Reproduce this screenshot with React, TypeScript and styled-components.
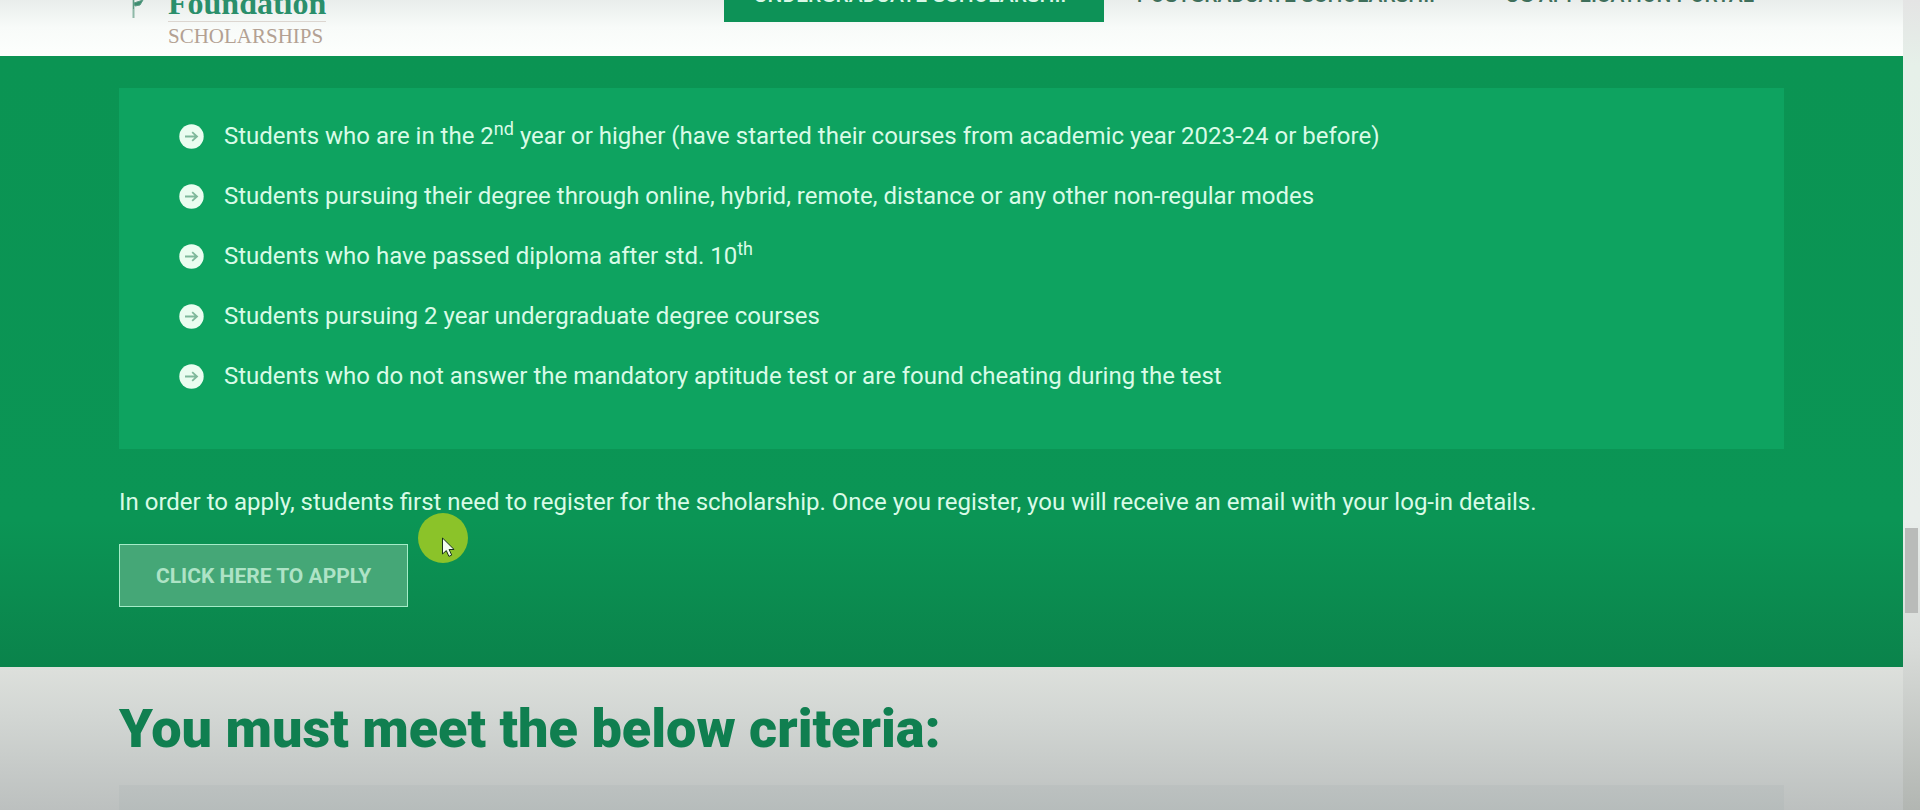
import React from "react";
import styled, { createGlobalStyle } from "styled-components";

const GlobalStyle = createGlobalStyle`
  * { box-sizing: border-box; }
  body {
    margin: 0;
    font-family: Roboto, "Liberation Sans", sans-serif;
    font-size: 24px;
    line-height: 36px;
  }
`;

const Page = styled.div`
  display: grid;
  grid-template-columns: minmax(0, 1fr) 17px;
  height: 100vh;
  overflow: hidden;
`;

const Content = styled.div`
  display: flex;
  flex-direction: column;
  min-width: 0;
  overflow: hidden;
`;

const Header = styled.header`
  display: flex;
  flex: none;
  justify-content: space-between;
  align-items: flex-end;
  height: 56px;
  padding: 0 119px;
  background: linear-gradient(#e9edeb, #f8fbf9 50%, #fdfffd);
`;

const Logo = styled.a`
  display: flex;
  align-items: flex-end;
  gap: 24px;
  padding: 0 0 10px 12px;
  text-decoration: none;
`;

const LogoMark = styled.svg`
  width: 13px;
  height: 40px;
  margin-bottom: 26px;
`;

const LogoText = styled.span`
  display: flex;
  flex-direction: column;
  font-family: "Liberation Serif", serif;
`;

const LogoName = styled.span`
  border-bottom: 1px solid #dcd6d0;
  color: #2a8f6b;
  font-size: 32px;
  font-weight: 700;
  line-height: 36px;
`;

const LogoSub = styled.span`
  padding-top: 4px;
  color: #b3a193;
  font-size: 21px;
  line-height: 20px;
`;

const Nav = styled.nav`
  display: flex;
  gap: 3px;
  padding-bottom: 34px;
`;

const NavLink = styled.a<{ $active?: boolean }>`
  padding: 14px 30px;
  background: ${(p) => (p.$active ? "#0d9257" : "transparent")};
  color: ${(p) => (p.$active ? "#d8f7e6" : "#3f6f5b")};
  font-size: 21px;
  font-weight: 500;
  line-height: 26px;
  text-decoration: none;
  white-space: nowrap;
`;

const Exclusions = styled.section`
  flex: none;
  padding: 32px 119px 60px;
  background: linear-gradient(#0b9453, #0b9555 76%, #0b8c50 88%, #0a834b);
  color: #d9fbe7;
`;

const Panel = styled.ul`
  display: flex;
  flex-direction: column;
  gap: 24px;
  margin: 0 0 35px;
  padding: 30px 60px 55px;
  background: #0ea360;
  list-style: none;
`;

const Item = styled.li`
  display: flex;
  align-items: center;
  gap: 20px;
`;

const Sup = styled.sup`
  font-size: 18px;
  line-height: 0;
`;

const Bullet = styled.svg`
  flex: none;
  width: 25px;
  height: 25px;
`;

const Intro = styled.p`
  margin: 0 0 24px;
`;

const Actions = styled.div`
  position: relative;
  display: flex;
`;

const ApplyButton = styled.button`
  padding: 17px 36px 16px;
  border: 1px solid #a5ecc8;
  background: #45a777;
  color: #aee3c6;
  font-family: inherit;
  font-size: 21px;
  font-weight: 700;
  line-height: 28px;
`;

const Pointer = styled.svg`
  position: absolute;
  top: -31px;
  left: 299px;
  width: 50px;
  height: 50px;
  pointer-events: none;
`;

const Criteria = styled.section`
  display: flex;
  flex: 1;
  flex-direction: column;
  padding: 30px 119px 0;
  background: linear-gradient(#dde0dc, #d2d6d3 35%, #bcc0bf);
`;

const Title = styled.h2`
  margin: 0 0 24px;
  color: #107f50;
  font-size: 54px;
  font-weight: 900;
  line-height: 64px;
`;

const CriteriaPanel = styled.div`
  flex: 1;
  background: linear-gradient(#bcc1c0, #b6bcbb);
`;

const Rail = styled.div`
  display: flex;
  flex-direction: column;
  padding: 0 2px;
  background: linear-gradient(#e4e4e4, #e6f0e9 8%, #e9eeeb 64%, #d8dbd8 80%, #b2b6b2);
`;

const Thumb = styled.div`
  height: 85px;
  margin-top: calc(100vh * 528 / 810);
  background: #b9bbb9;
`;

const ArrowBullet = () => (
  <Bullet viewBox="0 0 25 25" aria-hidden="true">
    <circle cx="12.5" cy="12.5" r="12.2" fill="#eafdf0" />
    <path d="M6 12.5h11.5M13.2 8.2l4.8 4.3-4.8 4.3" fill="none" stroke="#7fb99b" strokeWidth="1.8" />
  </Bullet>
);

const exclusions: React.ReactNode[] = [
  <>Students who are in the 2<Sup>nd</Sup> year or higher (have started their courses from academic year 2023-24 or before)</>,
  "Students pursuing their degree through online, hybrid, remote, distance or any other non-regular modes",
  <>Students who have passed diploma after std. 10<Sup>th</Sup></>,
  "Students pursuing 2 year undergraduate degree courses",
  "Students who do not answer the mandatory aptitude test or are found cheating during the test",
];

export default function App() {
  return (
    <Page>
      <GlobalStyle />
      <Content>
        <Header>
          <Logo href="#">
            <LogoMark viewBox="0 0 13 40" aria-hidden="true">
              <path d="M2.5 20v18" stroke="#8fb9a8" strokeWidth="2" />
              <path d="M2.5 20v9M3 23q6-2 9-3l-3 5-5 1z" fill="#3d8d70" stroke="#5d9c85" strokeWidth="1" />
            </LogoMark>
            <LogoText>
              <LogoName>Foundation</LogoName>
              <LogoSub>SCHOLARSHIPS</LogoSub>
            </LogoText>
          </Logo>
          <Nav>
            <NavLink href="#ug" $active>UNDERGRADUATE SCHOLARSHIP</NavLink>
            <NavLink href="#pg">POSTGRADUATE SCHOLARSHIP</NavLink>
            <NavLink href="#portal">UG APPLICATION PORTAL</NavLink>
          </Nav>
        </Header>
        <Exclusions>
          <Panel>
            {exclusions.map((text, i) => (
              <Item key={i}>
                <ArrowBullet />
                <span>{text}</span>
              </Item>
            ))}
          </Panel>
          <Intro>
            In order to apply, students first need to register for the scholarship. Once you register, you will
            receive an email with your log-in details.
          </Intro>
          <Actions>
            <ApplyButton type="button">CLICK HERE TO APPLY</ApplyButton>
            <Pointer viewBox="0 0 50 50" aria-hidden="true">
              <circle cx="25" cy="25" r="25" fill="#8bc329" />
              <path
                d="M24.5 25v16l3.8-3.4 2.6 5.8 2.8-1.3-2.6-5.6h5z"
                fill="#f4fdf0"
                stroke="#18301c"
                strokeWidth="1"
              />
            </Pointer>
          </Actions>
        </Exclusions>
        <Criteria>
          <Title>You must meet the below criteria:</Title>
          <CriteriaPanel />
        </Criteria>
      </Content>
      <Rail>
        <Thumb />
      </Rail>
    </Page>
  );
}
